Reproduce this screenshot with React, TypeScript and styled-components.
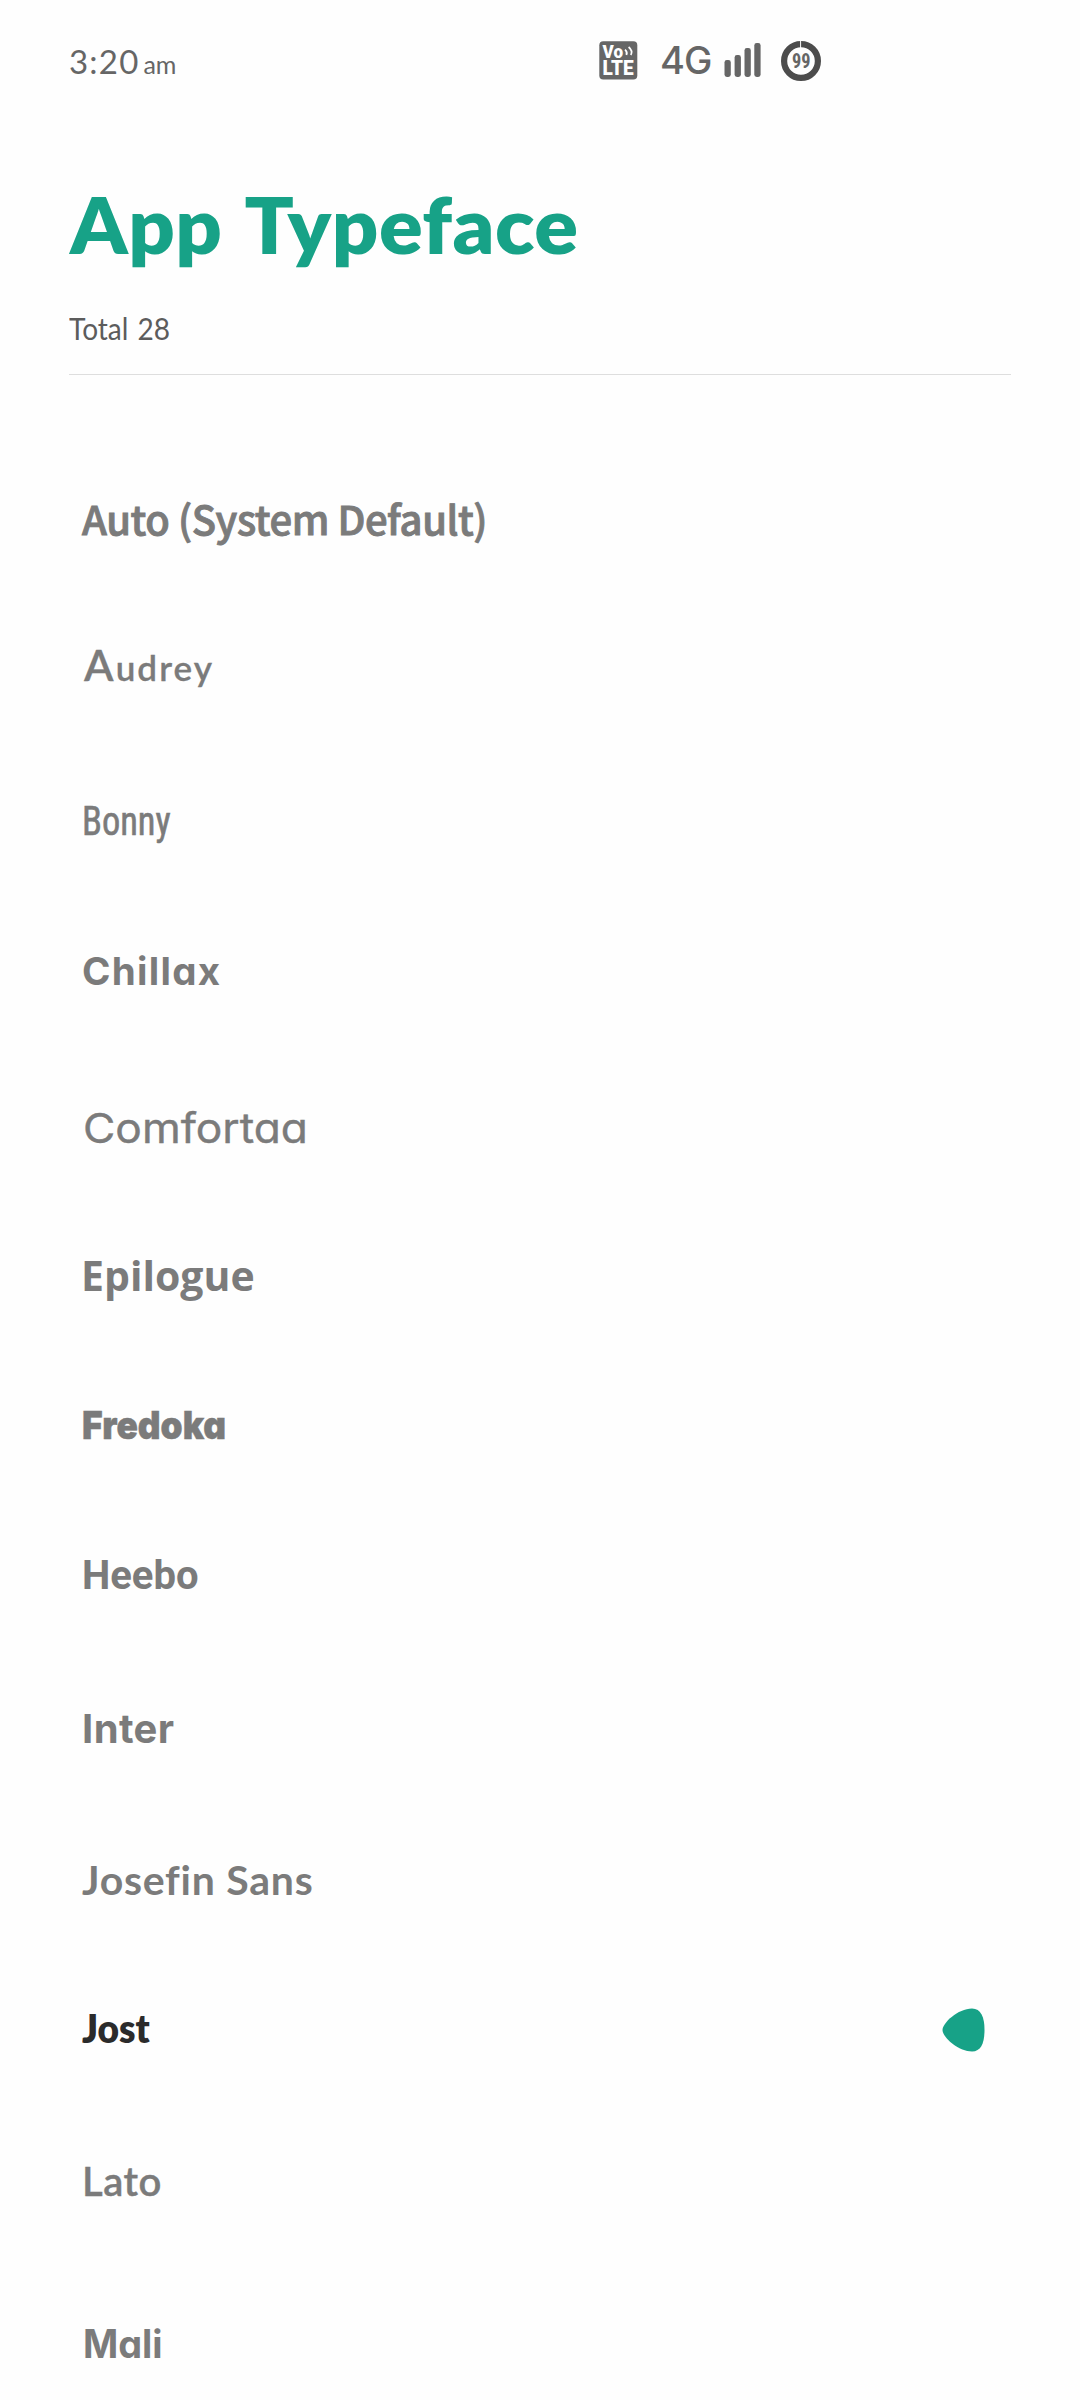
import React from "react";
import styled, { createGlobalStyle, css } from "styled-components";

const GlobalStyle = createGlobalStyle`
  html, body { margin: 0; background: #fefefe; }
  * { box-sizing: border-box; }
`;

const Screen = styled.main`
  width: 1080px;
  height: 2400px;
  overflow: hidden;
  background: #fefefe;
  font-family: Lato, sans-serif;
`;

/* A line whose text baseline sits exactly $rise below its top edge. */
const baselineRow = css<{ $rise: number }>`
  display: flex;
  align-items: baseline;
  white-space: nowrap;
  line-height: 1;
  &::before {
    content: "";
    width: 0;
    height: ${(p) => p.$rise}px;
  }
`;

const StatusBar = styled.div<{ $rise: number }>`
  ${baselineRow}
  height: 120px;
  padding-left: 69px;
  color: #666;
`;

const Clock = styled.div`
  width: 530px;
  font-size: 33px;
  letter-spacing: 1.2px;
`;

const Meridiem = styled.span`
  margin-left: 4px;
  font-size: 25px;
  letter-spacing: -0.2px;
`;

const Network = styled.span`
  width: 64px;
  margin-left: 22px;
  font: 500 38px/1 Inter, sans-serif;
  letter-spacing: -1px;
`;

const StatusIcon = styled.svg<{ $gap?: number }>`
  flex: none;
  align-self: flex-start;
  margin: 41px 0 0 ${(p) => p.$gap ?? 0}px;
`;

const Header = styled.header`
  margin: 0 69px;
  height: 255px;
  border-bottom: 1px solid #dedede;
`;

const Title = styled.h1<{ $rise: number }>`
  ${baselineRow}
  height: 160px;
  margin: 0 0 0 1px;
  color: #17a287;
  font-size: 77px;
  font-weight: 800;
  letter-spacing: 0.4px;
  word-spacing: 5px;
  transform: scaleX(1.055);
  transform-origin: left;
`;

const Total = styled.p<{ $rise: number }>`
  ${baselineRow}
  margin: 0;
  color: #5c5c5c;
  font-size: 30.5px;
  transform: scaleX(0.92);
  transform-origin: left;
  word-spacing: 2px;
`;

const List = styled.ul`
  list-style: none;
  margin: 0;
  padding: 0 95px 0 82px;
`;

const Row = styled.li<{ $rise: number }>`
  ${baselineRow}
  height: ${(p) => p.$rise + 60}px;
`;

interface Face {
  family: string;
  size: number;
  weight: number;
  tracking?: number;
  stretch?: number;
  indent?: number;
  singleStory?: boolean;
  outline?: number;
  initial?: number;
}

const Name = styled.span<{ $face: Face; $selected: boolean }>`
  display: inline-block;
  flex: none;
  margin-left: ${(p) => p.$face.indent ?? 0}px;
  color: ${(p) => (p.$selected ? "#2b2b2b" : "#7b7b7b")};
  font-family: ${(p) => p.$face.family}, sans-serif;
  font-size: ${(p) => p.$face.size}px;
  font-weight: ${(p) => p.$face.weight};
  letter-spacing: ${(p) => p.$face.tracking ?? 0}px;
  font-feature-settings: ${(p) => (p.$face.singleStory ? '"cv11"' : "normal")};
  -webkit-text-stroke: ${(p) => p.$face.outline ?? 0}px currentColor;
  transform: scaleX(${(p) => p.$face.stretch ?? 1});
  transform-origin: left;
  ${(p) =>
    p.$face.initial &&
    css`
      &::first-letter {
        font-size: ${p.$face.initial}px;
      }
    `}
`;

const Marker = styled.svg`
  align-self: center;
  margin-left: auto;
  margin-top: 1px;
  flex: none;
`;

const faces: { name: string; rise: number; face: Face }[] = [
  { name: "Auto (System Default)", rise: 160, face: { family: '"Noto Sans CJK JP"', size: 40, weight: 500, tracking: -0.45, outline: 0.9 } },
  { name: "Audrey", rise: 86, face: { family: "Lato", size: 35, weight: 600, tracking: 2.1, indent: 2, initial: 43, outline: 0.3 } },
  { name: "Bonny", rise: 94, face: { family: '"Roboto Condensed"', size: 40.5, weight: 400, stretch: 0.9, outline: 0.6 } },
  { name: "Chillax", rise: 90, face: { family: "Inter", size: 38.5, weight: 700, tracking: 1.3, singleStory: true } },
  { name: "Comfortaa", rise: 98, face: { family: "Inter", size: 41, weight: 400, stretch: 1.08, indent: 1, singleStory: true, outline: 0.4 } },
  { name: "Epilogue", rise: 88, face: { family: '"Open Sans"', size: 41, weight: 700, indent: -1 } },
  { name: "Fredoka", rise: 88, face: { family: "Inter", size: 39, weight: 900, stretch: 0.905, singleStory: true, outline: 0.5 } },
  { name: "Heebo", rise: 90, face: { family: "Roboto", size: 40, weight: 700 } },
  { name: "Inter", rise: 94, face: { family: "Inter", size: 40, weight: 700, tracking: 0.4 } },
  { name: "Josefin Sans", rise: 92, face: { family: "Lato", size: 41, weight: 700, tracking: 0.75 } },
  { name: "Jost", rise: 88, face: { family: "Lato", size: 39, weight: 800, stretch: 0.95 } },
  { name: "Lato", rise: 93, face: { family: "Lato", size: 40, weight: 600, tracking: 0.5, outline: 0.4 } },
  { name: "Mali", rise: 102, face: { family: "Inter", size: 39, weight: 700, stretch: 0.97, indent: 1, singleStory: true } },
];

const bars = [
  { x: 0.5, top: 19 },
  { x: 10.6, top: 14 },
  { x: 20.5, top: 7 },
  { x: 30.3, top: 2 },
];

function VolteIcon() {
  return (
    <StatusIcon width="39" height="39" viewBox="0 0 39 39">
      <rect x="0.3" y="0.2" width="38" height="38.2" rx="4" fill="#666" />
      <g fill="#fff" fontFamily="Roboto, sans-serif" fontWeight="900">
        <text x="3.6" y="17.4" fontSize="18" textLength="20.5" lengthAdjust="spacingAndGlyphs">Vo</text>
        <text x="3.6" y="34" fontSize="19.5" textLength="31" lengthAdjust="spacingAndGlyphs">LTE</text>
      </g>
      <g fill="none" stroke="#fff" strokeWidth="1.7">
        <path d="M26 8.6Q28.8 11 27.4 14" />
        <path d="M29.6 6Q34.2 9.8 31.8 14" />
      </g>
    </StatusIcon>
  );
}

function SignalIcon() {
  return (
    <StatusIcon width="37" height="38" viewBox="0 0 37 38">
      {bars.map((b) => (
        <rect key={b.x} x={b.x} y={b.top} width="6.3" height={36 - b.top} rx="2.4" fill="#666" />
      ))}
    </StatusIcon>
  );
}

function BatteryIcon() {
  return (
    <StatusIcon $gap={20} width="40" height="40" viewBox="0 0 40 40">
      <circle cx="20" cy="20" r="16.9" fill="none" stroke="#4c4c4c" strokeWidth="6.2" />
      <path d="M19.6 0V7" stroke="#fefefe" strokeWidth="1" />
      <text x="11" y="27.3" fontFamily="Roboto Condensed, Roboto, sans-serif" fontWeight="700" fontSize="20" textLength="18.5" lengthAdjust="spacingAndGlyphs" fill="#666">99</text>
    </StatusIcon>
  );
}

export default function App() {
  return (
    <Screen>
      <GlobalStyle />
      <StatusBar $rise={74}>
        <Clock>
          3:20<Meridiem>am</Meridiem>
        </Clock>
        <VolteIcon />
        <Network>4G</Network>
        <SignalIcon />
        <BatteryIcon />
      </StatusBar>
      <Header>
        <Title $rise={134}>App Typeface</Title>
        <Total $rise={60}>Total 28</Total>
      </Header>
      <List>
        {faces.map(({ name, rise, face }) => (
          <Row key={name} $rise={rise}>
            <Name $face={face} $selected={name === "Jost"}>{name}</Name>
            {name === "Jost" && (
              <Marker width="43" height="44" viewBox="0 0 43 44">
                <path d="M.5 22C.5 15 16 .5 30 .5C39 .5 42.5 9 42.5 22C42.5 35 39 43.5 30 43.5C16 43.5 .5 29 .5 22Z" fill="#17a287" />
              </Marker>
            )}
          </Row>
        ))}
      </List>
    </Screen>
  );
}
